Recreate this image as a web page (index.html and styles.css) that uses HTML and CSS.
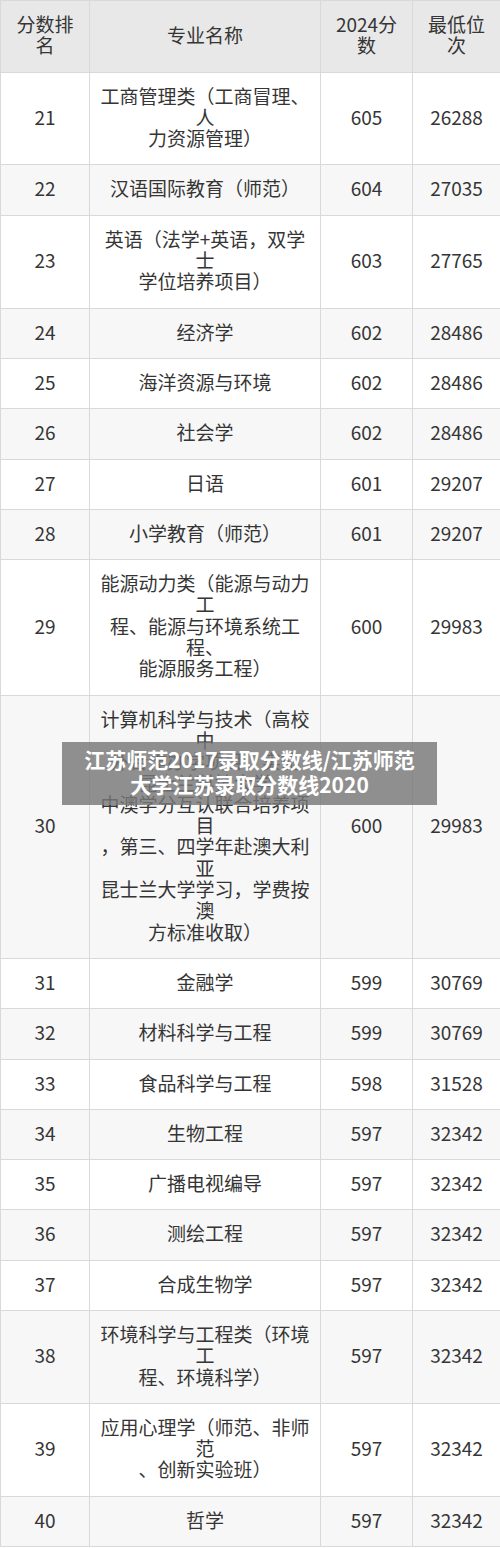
FILE: index.html
```html
<!DOCTYPE html>
<html lang="zh-CN">
<head>
<meta charset="utf-8">
<title>江苏师范大学录取分数线</title>
<link rel="stylesheet" href="styles.css">
</head>
<body>
<div class="page">
<table class="score-table">
<colgroup>
<col class="c-rank"><col class="c-name"><col class="c-score"><col class="c-pos">
</colgroup>
<thead>
<tr><th>分数排<br>名</th><th>专业名称</th><th>2024分<br>数</th><th>最低位<br>次</th></tr>
</thead>
<tbody>
<tr><td>21</td><td>工商管理类（工商冒理、<br>人<br>力资源管理）</td><td>605</td><td>26288</td></tr>
<tr><td>22</td><td>汉语国际教育（师范）</td><td>604</td><td>27035</td></tr>
<tr><td>23</td><td>英语（法学+英语，双学<br>士<br>学位培养项目）</td><td>603</td><td>27765</td></tr>
<tr><td>24</td><td>经济学</td><td>602</td><td>28486</td></tr>
<tr><td>25</td><td>海洋资源与环境</td><td>602</td><td>28486</td></tr>
<tr><td>26</td><td>社会学</td><td>602</td><td>28486</td></tr>
<tr><td>27</td><td>日语</td><td>601</td><td>29207</td></tr>
<tr><td>28</td><td>小学教育（师范）</td><td>601</td><td>29207</td></tr>
<tr><td>29</td><td>能源动力类（能源与动力<br>工<br>程、能源与环境系统工<br>程、<br>能源服务工程）</td><td>600</td><td>29983</td></tr>
<tr><td>30</td><td>计算机科学与技术（高校<br>中<br>外合作办学项目，实施<br>昆士兰科技大学<br>中澳学分互认联合培养项<br>目<br>，第三、四学年赴澳大利<br>亚<br>昆士兰大学学习，学费按<br>澳<br>方标准收取）</td><td>600</td><td>29983</td></tr>
<tr><td>31</td><td>金融学</td><td>599</td><td>30769</td></tr>
<tr><td>32</td><td>材料科学与工程</td><td>599</td><td>30769</td></tr>
<tr><td>33</td><td>食品科学与工程</td><td>598</td><td>31528</td></tr>
<tr><td>34</td><td>生物工程</td><td>597</td><td>32342</td></tr>
<tr><td>35</td><td>广播电视编导</td><td>597</td><td>32342</td></tr>
<tr><td>36</td><td>测绘工程</td><td>597</td><td>32342</td></tr>
<tr><td>37</td><td>合成生物学</td><td>597</td><td>32342</td></tr>
<tr><td>38</td><td>环境科学与工程类（环境<br>工<br>程、环境科学）</td><td>597</td><td>32342</td></tr>
<tr><td>39</td><td>应用心理学（师范、非师<br>范<br>、创新实验班）</td><td>597</td><td>32342</td></tr>
<tr><td>40</td><td>哲学</td><td>597</td><td>32342</td></tr>
</tbody>
</table>
<div class="caption">江苏师范2017录取分数线/江苏师范<br>大学江苏录取分数线2020</div>
</div>
</body>
</html>
```

FILE: styles.css
```css
html, body {
  margin: 0;
  padding: 0;
  background: #ffffff;
}
.page {
  position: relative;
  width: 500px;
  font-family: "Noto Sans CJK SC", "Noto Sans", sans-serif;
}
.score-table {
  width: 500px;
  border-collapse: collapse;
  table-layout: fixed;
  color: #353535;
  font-size: 19px;
  line-height: 21.3px;
}
.c-rank { width: 89px; }
.c-name { width: 231px; }
.c-score { width: 92px; }
.c-pos { width: 88px; }
.score-table th,
.score-table td {
  border: 1px solid #d9d9d9;
  padding: 12px 4px 16px;
  text-align: center;
  vertical-align: middle;
  font-weight: normal;
}
.score-table th {
  background: #e8e8e8;
}
.score-table tbody tr:nth-child(even) td {
  background: #f7f7f7;
}
.caption {
  position: absolute;
  left: 62px;
  top: 742px;
  width: 375px;
  height: 63px;
  box-sizing: border-box;
  padding-top: 5px;
  background: rgba(120, 120, 120, 0.82);
  color: #ffffff;
  font-weight: bold;
  font-size: 21px;
  line-height: 25px;
  text-align: center;
  white-space: nowrap;
}
```
